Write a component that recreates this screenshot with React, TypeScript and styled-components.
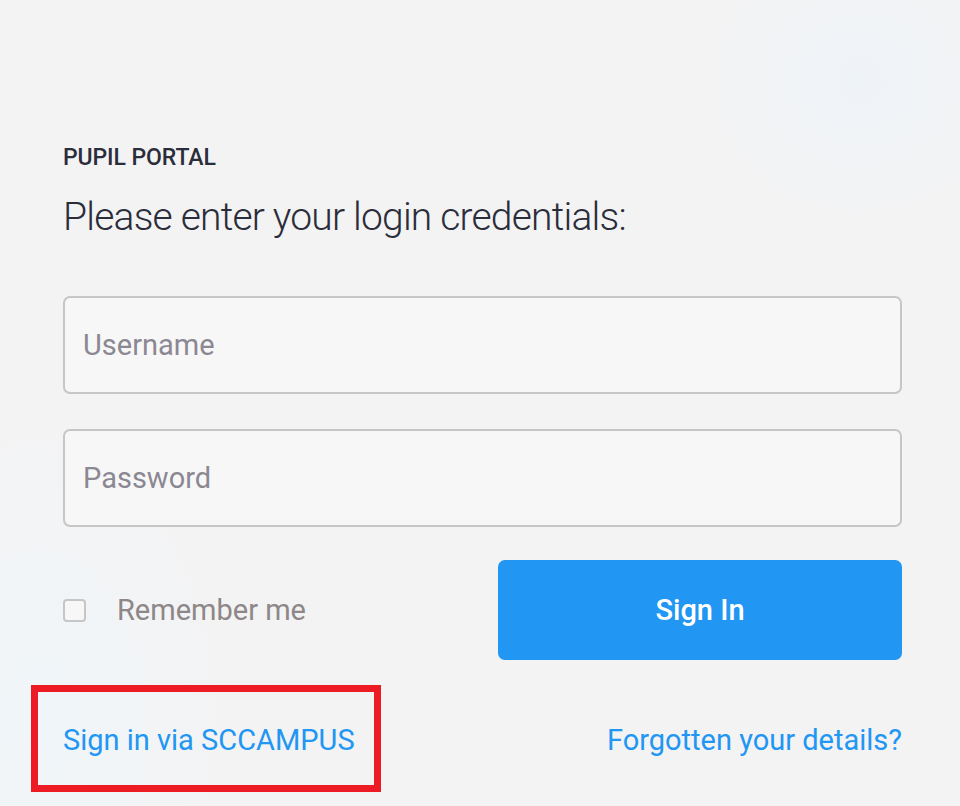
import React from "react";
import styled, { createGlobalStyle } from "styled-components";

const Global = createGlobalStyle`
  html, body { margin: 0; padding: 0; }
  body {
    background: #f3f3f4;
    font-family: Roboto, "Liberation Sans", sans-serif;
  }
  * { box-sizing: border-box; }
`;

const Page = styled.div`
  position: relative;
  width: 960px;
  height: 806px;
  overflow: hidden;
  background:
    radial-gradient(ellipse 260px 420px at 40px 720px, rgba(240, 246, 250, 0.9), rgba(240, 246, 250, 0) 70%),
    radial-gradient(ellipse 220px 200px at 860px 80px, rgba(238, 243, 248, 0.9), rgba(238, 243, 248, 0) 70%),
    #f3f3f4;
`;

const Form = styled.form`
  width: 839px;
  margin-left: 63px;
  padding-top: 144px;
  display: flex;
  flex-direction: column;
`;

const Eyebrow = styled.div`
  font-family: Roboto, "Liberation Sans", sans-serif;
  font-weight: 500;
  font-size: 23px;
  line-height: 28px;
  letter-spacing: -0.1px;
  color: #2b2d3a;
  text-transform: uppercase;
`;

const Heading = styled.h1`
  margin: 22px 0 0;
  font-family: Roboto, "Liberation Sans", sans-serif;
  font-weight: 300;
  font-size: 39px;
  line-height: 46px;
  letter-spacing: -0.8px;
  color: #2b2d3a;
`;

const Field = styled.input<{ $gap: number }>`
  display: block;
  width: 100%;
  height: 98px;
  margin-top: ${(p) => p.$gap}px;
  padding: 0 18px;
  border: 2px solid #c6c6c6;
  border-radius: 7px;
  background: #f7f7f7;
  font-family: Roboto, "Liberation Sans", sans-serif;
  font-size: 29px;
  color: #333;
  outline: none;
  &::placeholder { color: #8b8893; }
`;

const ActionRow = styled.div`
  margin-top: 33px;
  display: grid;
  grid-template-columns: 1fr 404px;
  align-items: center;
`;

const Remember = styled.label`
  display: flex;
  align-items: center;
  gap: 31px;
  font-family: Roboto, "Liberation Sans", sans-serif;
  font-size: 29px;
  color: #8e8788;
  cursor: pointer;
`;

const Box = styled.span`
  width: 23px;
  height: 23px;
  border: 2px solid #c6c6c6;
  border-radius: 4px;
  background: #f7f7f7;
  flex: none;
`;

const SignInButton = styled.button`
  height: 100px;
  border: none;
  border-radius: 7px;
  background: #2196f3;
  color: #fff;
  font-family: Roboto, "Liberation Sans", sans-serif;
  font-weight: 500;
  font-size: 29px;
  cursor: pointer;
`;

const LinkRow = styled.div`
  margin-top: 62px;
  display: flex;
  justify-content: space-between;
  align-items: center;
`;

const Link = styled.a`
  font-family: Roboto, "Liberation Sans", sans-serif;
  font-size: 29px;
  line-height: 36px;
  color: #2196f3;
  text-decoration: none;
`;

const Highlighted = styled.span`
  position: relative;
  display: inline-block;
`;

const Marker = styled.span`
  position: absolute;
  left: -32px;
  top: -37px;
  width: 350px;
  height: 107px;
  border: 7.5px solid #ed1c24;
  pointer-events: none;
`;

export default function App() {
  return (
    <Page>
      <Global />
      <Form onSubmit={(e) => e.preventDefault()}>
        <Eyebrow>Pupil Portal</Eyebrow>
        <Heading>Please enter your login credentials:</Heading>
        <Field $gap={56} type="text" placeholder="Username" />
        <Field $gap={35} type="password" placeholder="Password" />
        <ActionRow>
          <Remember>
            <Box />
            Remember me
          </Remember>
          <SignInButton type="submit">Sign In</SignInButton>
        </ActionRow>
        <LinkRow>
          <Highlighted>
            <Link href="#">Sign in via SCCAMPUS</Link>
            <Marker />
          </Highlighted>
          <Link href="#">Forgotten your details?</Link>
        </LinkRow>
      </Form>
    </Page>
  );
}
